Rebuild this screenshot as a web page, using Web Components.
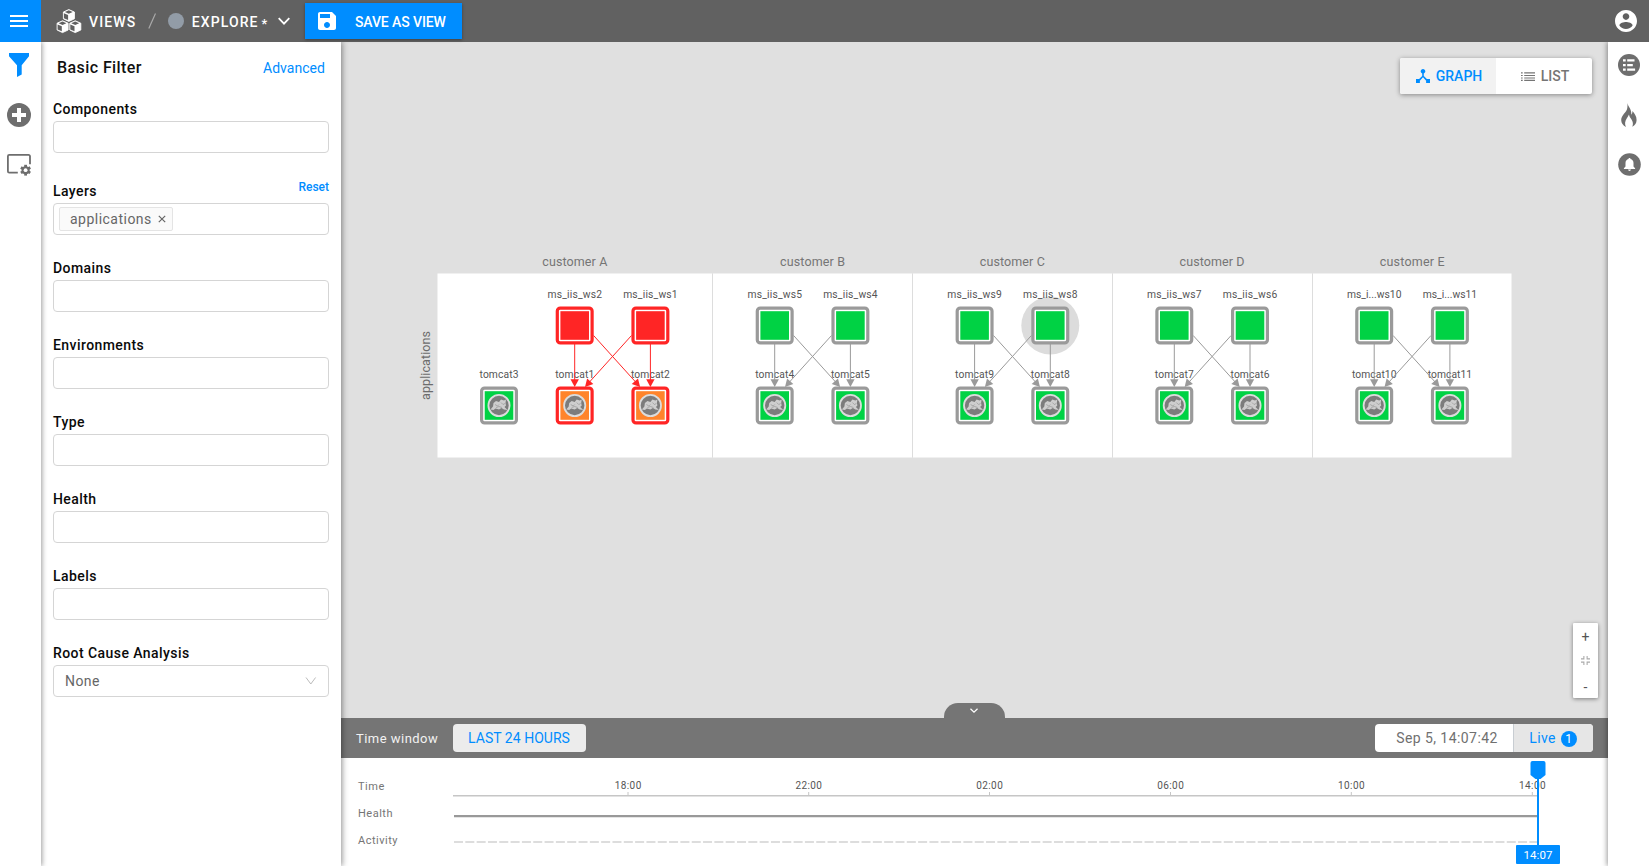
<!DOCTYPE html>
<html lang="en">
<head>
<meta charset="utf-8">
<title>Explore</title>
<style>
html,body{margin:0;height:100%;overflow:hidden}
body{font-family:Roboto,"Open Sans",sans-serif;font-size:14px;color:#111}
</style>
</head>
<body>
<app-shell></app-shell>
<script>
const define = (name, render) => customElements.define(name, class extends HTMLElement {
  connectedCallback() {
    if (this.shadowRoot) return;
    const root = this.attachShadow({mode: 'open'});
    root.innerHTML = '<style>*{box-sizing:border-box}:host{box-sizing:border-box;display:block}svg{display:block}</style>' + render(this);
  }
});

const ICONS = {
  menu: ['0 0 18 12', '<path fill="currentColor" d="M0 0h18v2H0zM0 5h18v2H0zM0 10h18v2H0z"/>'],
  cubes: ['0 0 26 25', (() => {
    const cube = (x, y) => `<g transform="translate(${x} ${y})"><path fill="#fff" stroke="#fff" stroke-width=".9" stroke-linejoin="round" d="M6.2 .6L11.8 3v6.8L6.2 12.4.8 9.8V3z"/><path fill="#616161" d="M6.2 1.300l3.900 1.700-3.900 1.800-3.900-1.800zM1.300 4.200l4.200 1.900v4.900L1.300 9.200z"/></g>`;
    return cube(6.6, 0) + cube(.3, 11.2) + cube(13, 11.2);
  })()],
  chevron: ['0 0 12 8', '<path fill="none" stroke="currentColor" stroke-width="1.8" d="M.7 1.2L6 6.6l5.300-5.400"/>'],
  thin: ['0 0 12 8', '<path fill="none" stroke="currentColor" stroke-width="1" d="M1 .5l4.800 6.500L10.600 .5"/>'],
  save: ['3 3 18 18', '<path fill="currentColor" d="M17 3H5c-1.110 0-2 .9-2 2v14c0 1.100.89 2 2 2h14c1.100 0 2-.9 2-2V7l-4-4zm-5 16c-1.660 0-3-1.340-3-3s1.340-3 3-3 3 1.340 3 3-1.340 3-3 3zm3-10H5V5h10v4z"/>'],
  user: ['2 2 20 20', '<path fill="currentColor" d="M12 2C6.480 2 2 6.480 2 12s4.480 10 10 10 10-4.480 10-10S17.520 2 12 2zm0 3c1.660 0 3 1.340 3 3s-1.340 3-3 3-3-1.340-3-3 1.340-3 3-3zm0 14.200c-2.500 0-4.710-1.280-6-3.220.03-1.990 4-3.080 6-3.080 1.990 0 5.970 1.090 6 3.080-1.290 1.940-3.500 3.220-6 3.220z"/>'],
  funnel: ['0 0 20 24', '<path fill="currentColor" d="M0 0h20v3.300l-7.300 8.900v9.300L8 24V12.200L0 3.300z"/>'],
  plus: ['0 0 24 24', '<circle cx="12" cy="12" r="12" fill="currentColor"/><path fill="#fff" d="M10 5h4v5h5v4h-5v5h-4v-5H5v-4h5z"/>'],
  window: ['0 0 24 22', '<path fill="none" stroke="currentColor" stroke-width="1.800" d="M10.800 18.700H2.300a1.400 1.400 0 0 1-1.400-1.400V2.300A1.400 1.400 0 0 1 2.300.9h19.300A1.400 1.400 0 0 1 23 2.300v7.900"/><g transform="translate(18.600 16.200)"><g fill="currentColor"><circle r="4"/><path d="M-1.400-5.400h2.800v10.800h-2.800z"/><path d="M-1.400-5.400h2.800v10.800h-2.800z" transform="rotate(60)"/><path d="M-1.400-5.400h2.800v10.800h-2.800z" transform="rotate(120)"/></g><circle r="1.900" fill="#fff"/></g>'],
  hub: ['3 3 18 18', '<path fill="currentColor" d="M17 16l-4-4V8.820C14.160 8.400 15 7.300 15 6c0-1.660-1.340-3-3-3S9 4.340 9 6c0 1.300.84 2.400 2 2.820V12l-4 4H3v5h5v-3.050l4-4.200 4 4.200V21h5v-5h-4z"/>'],
  list: ['0 0 14 9', '<path fill="currentColor" d="M0 .3h1.700v1.200H0zM3.200.3H14v1.200H3.200zM0 2.900h1.700v1.200H0zM3.200 2.900H14v1.200H3.200zM0 5.400h1.700v1.200H0zM3.200 5.400H14v1.200H3.200zM0 7.800h1.700V9H0zM3.200 7.800H14V9H3.200z"/>'],
  details: ['0 0 22 22', '<circle cx="11" cy="11" r="11" fill="currentColor"/><path fill="#fff" d="M5 5.200h2.700v2.300H5zM9.200 5.200h7.300v2.300H9.200zM5 9.900h2.700v2.300H5zM9.200 9.900h5.600v2.300H9.200zM5 14.500h2.700v2.300H5zM9.200 14.500h7.900v2.300H9.200z"/>'],
  flame: ['0 0 16 24', '<path fill="currentColor" d="M6.500 0c.3 3.100 3.200 5 3.700 9.200.1 1 .1 1.800 0 2.600.9-.9 1.300-2 1.200-3.800 1.900 2.300 4.300 5.200 4.200 9-.1 3-1.500 5.500-4.300 6.800 1.100-2.800.7-5-.8-7.300-1.100-1.600-2.200-3-2.500-5-1.200 2.800-3.600 4.900-3.900 8.200-.1 1.500.2 2.900.9 4.200C2 22.400.2 20 .2 16.900c0-5.100 5.400-7.300 6.100-12C6.600 3.200 6.500 1.500 6.500 0z"/>'],
  bell: ['0 0 23 23', '<circle cx="11.500" cy="11.500" r="11.300" fill="currentColor"/><path fill="#fff" d="M11.500 5c.7 0 1 .4 1 1 1.900.5 3 2 3 4v3.400l1.600 1.900v.7H5.900v-.7l1.600-1.900V10c0-2 1.100-3.500 3-4 0-.6.300-1 1-1zM10.100 16.600h2.800c0 .8-.6 1.400-1.400 1.400s-1.400-.6-1.400-1.400z"/>'],
  fit: ['0 0 10 10', '<path fill="none" stroke="currentColor" stroke-width="1.200" d="M3.200 0v3.200H0M6.800 0v3.200H10M3.200 10V6.800H0M6.800 10V6.800H10"/>'],
  close: ['0 0 8 8', '<path fill="none" stroke="currentColor" stroke-width="1.200" d="M.8.8l6.400 6.400M7.200.8L.8 7.200"/>']
};
define('ui-icon', el => {
  const [box, body] = ICONS[el.getAttribute('name')];
  return `<style>:host{flex:none;width:${el.getAttribute('w')}px;height:${el.getAttribute('h')}px}svg{width:100%;height:100%}</style><svg viewBox="${box}" preserveAspectRatio="none">${body}</svg>`;
});

define('app-header', () => `<style>
:host{display:flex;align-items:center;height:42px;background:#616161;color:#fff;font-weight:500;font-size:14px;letter-spacing:1.1px}
.menu{width:41px;height:42px;background:#008dff;display:flex;align-items:center;padding-left:10px}
.views{display:flex;align-items:center;gap:7px;margin-left:15px}
.dot{width:16px;height:16px;border-radius:50%;background:#929ca7;margin-right:8px}
.name{position:relative;top:1px}
.star{font-size:13px;margin-left:3px;width:8px;line-height:16px;top:3px}
.save{display:flex;align-items:center;height:36px;width:157px;background:#008dff;margin-left:15px;padding-left:13px;gap:19px;box-shadow:0 1px 3px rgba(0,0,0,.35);letter-spacing:-.1px}
.views span{position:relative;top:1px}
.end{margin-left:auto;margin-right:12px}
</style>
<div class="menu"><ui-icon name="menu" w="18" h="12"></ui-icon></div>
<div class="views"><ui-icon name="cubes" w="26" h="25"></ui-icon><span>VIEWS</span></div>
<svg width="8" height="16" style="margin:0 12px 0 11.5px"><path d="M7.500 .5L.8 15.500" stroke="#aaa" stroke-width="1.200"/></svg>
<div class="dot"></div><span class="name">EXPLORE</span><span class="name star">*</span>
<ui-icon name="chevron" w="12" h="8" style="margin-left:8.3px"></ui-icon>
<div class="save"><ui-icon name="save" w="18" h="18"></ui-icon><span class="name">SAVE AS VIEW</span></div>
<ui-icon class="end" name="user" w="22" h="22"></ui-icon>`);

define('icon-rail', () => `<style>
:host{background:#fff;width:41px;display:flex;flex-direction:column;align-items:center;color:#6e6e6e}
</style><slot></slot>`);

define('filter-field', el => `<style>
:host{height:56px}
.top{height:24px;line-height:24px;display:flex;justify-content:space-between;font-weight:500;font-size:14px;letter-spacing:.43px;color:#0a0a0a}
.top b{color:#008dff;font-weight:500;font-size:12px;letter-spacing:0;position:relative;top:-4px}
.box{height:32px;border:1px solid #d5d5d5;border-radius:4px;display:flex;align-items:center;padding:0 5px;background:#fff}
</style><div class="top"><span>${el.getAttribute('label')}</span>${el.hasAttribute('reset') ? '<b>Reset</b>' : ''}</div><div class="box"><slot></slot></div>`);

define('filter-tag', () => `<style>
:host{display:flex;align-items:center;gap:6px;height:24px;background:#fafafa;border:1px solid #e4e4e4;border-radius:2px;padding:0 6px 0 10px;color:#666;letter-spacing:.48px}
</style><span><slot></slot></span><ui-icon name="close" w="8" h="8"></ui-icon>`);

define('select-value', () => `<style>
:host{display:flex;flex:1;align-items:center;justify-content:space-between;padding:0 6px;color:#666;letter-spacing:.4px}
ui-icon{color:#bbb}
</style><span><slot></slot></span><ui-icon name="thin" w="12" h="8"></ui-icon>`);

define('filter-panel', () => `<style>
:host{width:300px;background:#fff;padding:0 12px}
header{display:flex;align-items:center;justify-content:space-between;height:51px;padding:0 4px}
h2{margin:0;font-weight:500;font-size:16px;letter-spacing:.42px;color:#111}
a{color:#008dff;letter-spacing:.04px}
.fields{display:flex;flex-direction:column;gap:21px;padding-top:4px}
</style><header><h2>Basic Filter</h2><a>Advanced</a></header>
<div class="fields">
<filter-field label="Components" style="margin-bottom:5px"></filter-field>
<filter-field label="Layers" reset><filter-tag>applications</filter-tag></filter-field>
<filter-field label="Domains"></filter-field><filter-field label="Environments"></filter-field>
<filter-field label="Type"></filter-field><filter-field label="Health"></filter-field>
<filter-field label="Labels"></filter-field>
<filter-field label="Root Cause Analysis"><select-value>None</select-value></filter-field>
</div>`);

const GREEN = '#00d244', GREY = '#9a9a9a', RED = '#ff2525', ORANGE = '#ff842b';
define('topology-graph', () => {
  const lanes = [
    {name: 'customer A', x: 437.500, w: 274.500, title: 574.800, l: 574.700, a: ['ms_iis_ws2', 'ms_iis_ws1'], b: ['tomcat1', 'tomcat2'], c: RED, top: RED, bottom: ORANGE},
    {name: 'customer B', x: 712.500, w: 199.500, title: 812.500, l: 774.700, a: ['ms_iis_ws5', 'ms_iis_ws4'], b: ['tomcat4', 'tomcat5']},
    {name: 'customer C', x: 912.500, w: 199.500, title: 1012.300, l: 974.600, a: ['ms_iis_ws9', 'ms_iis_ws8'], b: ['tomcat9', 'tomcat8'], sel: 1},
    {name: 'customer D', x: 1112.500, w: 199.500, title: 1212, l: 1174.300, a: ['ms_iis_ws7', 'ms_iis_ws6'], b: ['tomcat7', 'tomcat6']},
    {name: 'customer E', x: 1312.500, w: 199, title: 1412.200, l: 1374.200, a: ['ms_i...ws10', 'ms_i...ws11'], b: ['tomcat10', 'tomcat11']}];
  const node = (x, y, ring, fill, cat) => `<g transform="translate(${x} ${y})"><rect x="-17.400" y="-17.400" width="34.800" height="34.800" rx="3" fill="#fff" stroke="${ring}" stroke-width="3.200"/><rect x="-14.300" y="-14.300" width="28.600" height="28.600" fill="${fill}"/>${cat ? '<circle r="10.600" fill="#7c7c7c" stroke="#dcdcdc" stroke-width="1.800"/><path fill="#cecece" d="M-8.500 4L-6 1-5.500-2.500-3-4.500 0-3.500 2-6 5-5 7-6 6.500-2.500 7 0 5.500 1.500 8.500 4.500 5 4 2.500 2.500 0 4-3.500 3-5.500 4.500z"/><path fill="none" stroke="#959595" stroke-width=".7" d="M-4-1l2.500 1.500L0-1M2-3l2 2 2-1M-3 2l3-1 3 1"/>' : ''}</g>`;
  const label = (x, y, t) => { const w = t.startsWith('ms') ? 54.500 : t.length === 7 ? 39 : 44.500; return `<text x="${x}" y="${y}" font-size="10.300" fill="#555" textLength="${w}" text-anchor="middle">${t}</text>`; };
  const edge = (x1, y1, x2, y2, c) => {
    const a = Math.atan2(y2 - y1, x2 - x1), d = a * 180 / Math.PI;
    return `<path d="M${x1} ${y1}L${x2 - 6 * Math.cos(a)} ${y2 - 6 * Math.sin(a)}" stroke="${c}" stroke-width="1"/><path transform="translate(${x2} ${y2}) rotate(${d})" d="M0 0L-7.800-4.200v8.400z" fill="${c}"/>`;
  };
  let s = '';
  for (const n of lanes) {
    const c = n.c || GREY, l = n.l, r = l + 75.700;
    s += `<rect x="${n.x}" y="273.500" width="${n.w}" height="184" fill="#fff"/>`;
    if (n.x > 500) s += `<path d="M${n.x} 273.500v184" stroke="#ddd"/>`;
    s += `<text x="${n.title}" y="266" font-size="12.500" fill="#757575" textLength="65" text-anchor="middle">${n.name}</text>`;
    if (n.sel) s += `<circle cx="${r}" cy="325.500" r="29" fill="#dcdcdc"/>`;
    s += label(l, 298.200, n.a[0]) + label(r, 298.200, n.a[1]) + label(l, 378.200, n.b[0]) + label(r, 378.200, n.b[1]);
    s += edge(l, 344, l, 387, c) + edge(r, 344, r, 387, c) + edge(l + 18.900, 335.500, r - 10.300, 387, c) + edge(r - 18.900, 335.500, l + 10.300, 387, c);
    s += node(l, 325.500, c, n.top || GREEN) + node(r, 325.500, c, n.top || GREEN) + node(l, 405.500, c, n.bottom || GREEN, 1) + node(r, 405.500, c, n.bottom || GREEN, 1);
  }
  s += label(499, 378.200, 'tomcat3') + node(499, 405.500, GREY, GREEN, 1);
  s += `<text transform="translate(430.300 365.500) rotate(-90)" font-size="12.500" fill="#6c6c6c" textLength="69" text-anchor="middle">applications</text>`;
  return `<svg width="1267" height="676" viewBox="341 42 1267 676" font-family="Roboto,sans-serif">${s}</svg>`;
});

define('view-toggle', () => `<style>
:host{display:flex;width:192px;height:36px;background:#fff;border-radius:2px;box-shadow:0 1px 5px rgba(0,0,0,.4);font-weight:500}
div{flex:1;display:flex;align-items:center;justify-content:center;gap:6px;color:#757575;padding-left:2px}
.on{background:#f2f2f2;color:#008dff;border-radius:2px 0 0 2px}
</style><div class="on"><ui-icon name="hub" w="14" h="14"></ui-icon><span>GRAPH</span></div><div><ui-icon name="list" w="14" h="9"></ui-icon><span>LIST</span></div>`);

define('zoom-controls', () => `<style>
:host{display:flex;flex-direction:column;align-items:center;width:25px;height:75px;background:#fff;border-radius:1px;box-shadow:0 1px 4px rgba(0,0,0,.45);color:#555;justify-content:space-between;padding:5px 0 2px;line-height:18px}
ui-icon{color:#aaa;position:relative;top:-2px}
</style><span>+</span><ui-icon name="fit" w="9" h="9"></ui-icon><span>-</span>`);

define('map-canvas', () => `<style>
:host{position:relative;background:#e0e0e0;height:676px;overflow:hidden}
view-toggle{position:absolute;right:16px;top:16px}
zoom-controls{position:absolute;right:10px;bottom:20px}
.tab{position:absolute;left:603px;bottom:0;width:61px;height:15px;border-radius:14px 14px 0 0;background:#757575;color:#fff;display:flex;justify-content:center;padding:5px 1px 0 0}
</style><topology-graph></topology-graph><view-toggle></view-toggle><zoom-controls></zoom-controls><div class="tab"><ui-icon name="chevron" w="8" h="5"></ui-icon></div>`);

define('time-bar', () => `<style>
:host{display:flex;align-items:center;height:40px;background:#757575;color:#f2f2f2;padding:0 15px;letter-spacing:.43px}
.w{width:97px;font-size:13px;letter-spacing:.47px}
.range{width:133px;height:28px;border-radius:4px;background:#ececec;color:#008dff;display:flex;align-items:center;justify-content:center;letter-spacing:.03px;padding-right:1px}
.now{margin-left:auto;display:flex;height:28px;border-radius:4px;overflow:hidden;background:#fff;color:#707070}
.d{width:138px;display:flex;align-items:center;justify-content:center;padding-left:6px}
.live{width:80px;background:#e6e6e6;border-left:1px solid #c8cdd2;color:#008dff;display:flex;align-items:center;justify-content:center;gap:5px;letter-spacing:.3px;padding-right:1px}
i{font-style:normal;width:16px;height:16px;border-radius:50%;background:#008dff;color:#fff;font-size:12px;line-height:16px;text-align:center;letter-spacing:0;position:relative;top:1px}
</style><span class="w">Time window</span><span class="range">LAST 24 HOURS</span>
<div class="now"><span class="d">Sep 5, 14:07:42</span><span class="live">Live<i>1</i></span></div>`);

define('time-line', () => {
  const ticks = [['18:00', 628], ['22:00', 808.700], ['02:00', 989.500], ['06:00', 1170.500], ['10:00', 1351.300], ['14:00', 1532.300]];
  return `<style>
:host{display:grid;grid-template-columns:95px 1fr;height:108px;background:#fff;padding-left:17px}
.names{display:flex;flex-direction:column;padding-top:15px;font-size:11px;color:#757575;letter-spacing:.5px}
.names span{height:27px;line-height:27px}
</style><div class="names"><span>Time</span><span>Health</span><span>Activity</span></div>
<svg width="1155" height="108" viewBox="453 758 1155 108" font-family="Roboto,sans-serif">
<path d="M453 795.700h1085" stroke="#c6c6c6" stroke-width="1.400"/>
${ticks.map(([t, x]) => `<path d="M${x} 792v4" stroke="#c6c6c6"/><text x="${x}" y="789" font-size="10" fill="#555" textLength="26.500" text-anchor="middle">${t}</text>`).join('')}
<path d="M454 816.100h1084" stroke="#999" stroke-width="2.200"/>
<path d="M454 842h1084" stroke="#ddd" stroke-width="2" stroke-dasharray="9 2.320"/>
<path d="M1537 775h2v72h-2z" fill="#008dff"/>
<path d="M1532.500 761h11a2 2 0 0 1 2 2v12l-5 4h-5l-5-4v-12a2 2 0 0 1 2-2z" fill="#008dff"/>
<rect x="1516" y="845" width="44" height="19" rx="1" fill="#008dff"/>
<text x="1538" y="859" font-size="11.500" fill="#fff" textLength="29" text-anchor="middle">14:07</text>
</svg>`;
});

define('app-shell', () => `<style>
:host{display:flex;flex-direction:column;width:1649px;height:866px;background:#fff}
.body{display:flex;flex:1;min-height:0}
icon-rail,filter-panel{position:relative}
.left{z-index:3;box-shadow:1px 0 5px rgba(0,0,0,.4);padding-top:11px;padding-right:3px}
filter-panel{z-index:2;box-shadow:1px 0 6px rgba(0,0,0,.45)}
.right{z-index:2;box-shadow:-1px 0 5px rgba(0,0,0,.4);padding-top:12px;padding-left:1px}
main{width:1267px;display:flex;flex-direction:column}
app-header{position:relative;z-index:4}
</style><app-header></app-header>
<div class="body">
<icon-rail class="left"><ui-icon name="funnel" w="20" h="24" style="color:#008dff"></ui-icon><ui-icon name="plus" w="24" h="24" style="margin-top:26px"></ui-icon><ui-icon name="window" w="24" h="22" style="margin-top:27px"></ui-icon></icon-rail>
<filter-panel></filter-panel>
<main><map-canvas></map-canvas><time-bar></time-bar><time-line></time-line></main>
<icon-rail class="right"><ui-icon name="details" w="22" h="22"></ui-icon><ui-icon name="flame" w="16" h="24" style="margin-top:27px"></ui-icon><ui-icon name="bell" w="23" h="23" style="margin-top:26px"></ui-icon></icon-rail>
</div>`);
</script>
</body>
</html>
